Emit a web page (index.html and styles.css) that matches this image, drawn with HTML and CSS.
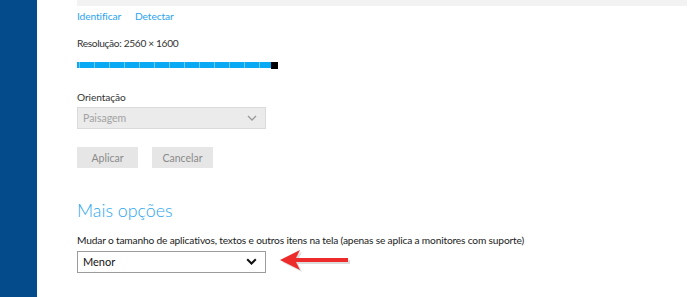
FILE: index.html
```html
<!DOCTYPE html>
<html lang="pt">
<head>
<meta charset="utf-8">
<link rel="stylesheet" href="styles.css">
</head>
<body>
<div class="page">
  <aside class="sidebar"></aside>
  <main class="content">
    <div class="topstrip"></div>
    <div class="links">
      <span class="link">Identificar</span>
      <span class="link">Detectar</span>
    </div>
    <div class="label res">Resolução: 2560 × 1600</div>
    <div class="slider"><div class="track"></div><div class="thumb"></div></div>
    <div class="label orient">Orientação</div>
    <div class="select disabled"><span>Paisagem</span>
      <svg class="chev" width="10" height="6" viewBox="0 0 10 6"><path d="M1 1 L5 5 L9 1" fill="none" stroke="#9a9a9a" stroke-width="1.3"/></svg>
    </div>
    <div class="buttons">
      <div class="btn">Aplicar</div>
      <div class="btn">Cancelar</div>
    </div>
    <h2 class="heading">Mais opções</h2>
    <div class="label desc">Mudar o tamanho de aplicativos, textos e outros itens na tela (apenas se aplica a monitores com suporte)</div>
    <div class="row">
      <div class="select active"><span>Menor</span>
        <svg class="chev" width="11" height="7" viewBox="0 0 11 7"><path d="M1.2 1.2 L5.5 5.5 L9.8 1.2" fill="none" stroke="#111" stroke-width="2"/></svg>
      </div>
      <svg class="arrow" width="74" height="26" viewBox="0 0 74 26">
        <g transform="translate(2,2)" fill="#9a9a9a" opacity="0.35">
          <path d="M0 10 L20 0 L16 8 L68 8 L68 12 L16 12 L20 20 Z"/>
        </g>
        <path d="M0 10 L20 0 L16 8 L68 8 L68 12 L16 12 L20 20 Z" fill="#ee2b2b"/>
      </svg>
    </div>
  </main>
</div>
</body>
</html>
```
FILE: styles.css
```css
html, body {
  margin: 0;
  padding: 0;
  background: #ffffff;
}
body {
  font-family: Lato, "Open Sans", sans-serif;
  color: #333333;
}
.page {
  display: flex;
  width: 695px;
  height: 297px;
  overflow: hidden;
}
.sidebar {
  width: 37px;
  flex: none;
  background: #034b8b;
}
.content {
  flex: 1;
  padding-left: 40px;
  display: flex;
  flex-direction: column;
  align-items: flex-start;
}
.topstrip {
  height: 6px;
  width: 610px;
  background: #f2f2f2;
}
.links {
  display: flex;
  gap: 14px;
  margin-top: 3px;
  height: 14px;
  line-height: 14px;
}
.link {
  font-size: 10.2px;
  letter-spacing: -0.1px;
  color: #2aa3ef;
}
.label {
  font-size: 10.2px;
  letter-spacing: -0.1px;
  line-height: 14px;
  height: 14px;
  color: #333;
}
.res {
  margin-top: 13px;
  letter-spacing: -0.35px;
}
.slider {
  margin-top: 12px;
  display: flex;
  height: 6px;
}
.track {
  width: 194px;
  height: 6px;
  background-color: #0aa9f4;
  background-image: repeating-linear-gradient(90deg, transparent 0, transparent 2px, #6ccaf6 2px, #6ccaf6 3px, transparent 3px, transparent 15px);
  background-size: 194px 6px;
}
.thumb {
  width: 7px;
  height: 7px;
  margin-top: -0.5px;
  background: #000;
}
.orient {
  margin-top: 22px;
}
.select {
  box-sizing: border-box;
  width: 189px;
  height: 22px;
  margin-top: 3px;
  display: flex;
  align-items: center;
  justify-content: space-between;
  padding: 0 8px 0 5px;
  font-size: 10.5px;
}
.select.disabled {
  background: #ebebeb;
  border: 1px solid #dadada;
  color: #a2a2a2;
}
.select.active {
  background: #fff;
  border: 1.5px solid #9c9c9c;
  color: #111;
  margin-top: 0;
  font-size: 11px;
}
.buttons {
  display: flex;
  gap: 14px;
  margin-top: 18px;
}
.btn {
  width: 61px;
  height: 21px;
  background: #e6e6e6;
  color: #8a8a8a;
  font-size: 10.5px;
  display: flex;
  align-items: center;
  justify-content: center;
}
.heading {
  margin: 30px 0 0 0;
  font-size: 17.8px;
  font-weight: 300;
  line-height: 24px;
  color: #2aa6ef;
}
.desc {
  margin-top: 11px;
  color: #222;
  letter-spacing: -0.17px;
}
.row {
  display: flex;
  align-items: center;
  margin-top: 0;
}
.arrow {
  margin-left: 14px;
  margin-top: 3px;
}
```
